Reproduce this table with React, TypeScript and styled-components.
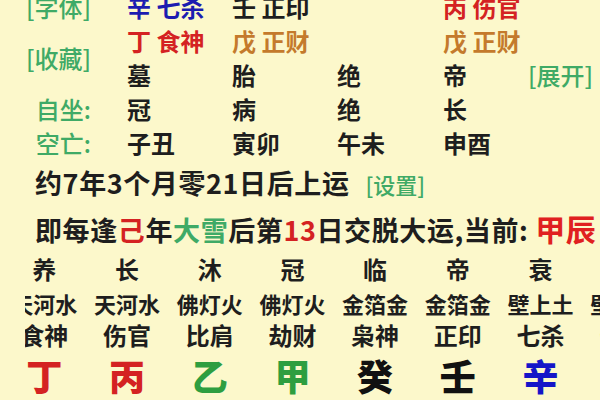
import React from "react";
import styled, { createGlobalStyle } from "styled-components";

const Global = createGlobalStyle`
  html, body { margin: 0; padding: 0; background: #fcf8cb; }
  body { font-family: "Noto Sans CJK SC", "Noto Sans", sans-serif; color: #1e1e1e; }
`;

const C = {
  green: "#3faa66",
  green2: "#2e9e40",
  red: "#d42222",
  blue: "#1c1cb0",
  orange: "#c47a2c",
  black: "#1e1e1e",
};

const Page = styled.div`
  width: 600px;
  height: 400px;
  overflow: hidden;
  background: #fcf8cb;
`;

const Content = styled.div`
  margin-top: -10px;
`;

const TopGrid = styled.div`
  display: grid;
  grid-template-columns: 127px 105px 105px 106px 85px 1fr;
  grid-auto-rows: 34px;
  align-items: center;
  font-size: 24px;
  font-weight: 700;
  white-space: nowrap;
`;

const Label = styled.div<{ $span?: number }>`
  grid-column: 1;
  grid-row: ${(p) => (p.$span ? `span ${p.$span}` : "auto")};
  text-align: right;
  padding-right: 36px;
  color: ${C.green};
  font-weight: 500;
  line-height: 34px;
`;

const Cell = styled.div<{ $color?: string; $col?: number }>`
  color: ${(p) => p.$color || C.black};
  grid-column: ${(p) => (p.$col ? p.$col : "auto")};
  line-height: 34px;
`;

const Link = styled.div`
  grid-column: 6;
  color: ${C.green};
  font-weight: 500;
  line-height: 34px;
`;

const Line = styled.div<{ $h: number }>`
  height: ${(p) => p.$h}px;
  line-height: ${(p) => p.$h}px;
  padding-left: 35px;
  font-size: 27px;
  font-weight: 700;
  letter-spacing: 0.6px;
  white-space: nowrap;
  overflow: hidden;
`;

const Mark = styled.span<{ $color: string; $size?: number }>`
  color: ${(p) => p.$color};
  font-size: ${(p) => (p.$size ? `${p.$size}px` : "inherit")};
`;

const Setting = styled.span`
  color: ${C.green};
  font-size: 22px;
  font-weight: 500;
  letter-spacing: 0;
  margin-left: 16px;
`;

const TableClip = styled.div`
  margin-left: 25px;
  overflow: hidden;
`;

const Table = styled.div`
  margin-left: -22px;
  display: grid;
  grid-template-columns: repeat(8, 82.7px);
  width: max-content;
`;

const TCell = styled.div<{ $h: number; $size: number; $weight: number; $color?: string }>`
  height: ${(p) => p.$h}px;
  line-height: ${(p) => p.$h}px;
  font-size: ${(p) => p.$size}px;
  font-weight: ${(p) => p.$weight};
  color: ${(p) => p.$color || C.black};
  text-align: center;
  white-space: nowrap;
`;

const stages = ["养", "长", "沐", "冠", "临", "帝", "衰", "病"];
const nayin = ["天河水", "天河水", "佛灯火", "佛灯火", "金箔金", "金箔金", "壁上土", "壁上土"];
const gods = ["食神", "伤官", "比肩", "劫财", "枭神", "正印", "七杀", "七杀"];
const stems: [string, string][] = [
  ["丁", C.red],
  ["丙", C.red],
  ["乙", C.green2],
  ["甲", C.green2],
  ["癸", "#111"],
  ["壬", "#111"],
  ["辛", "#1515c8"],
  ["庚", "#111"],
];

export default function App() {
  return (
    <Page>
      <Global />
      <Content>
        <TopGrid>
          <Label>[字体]</Label>
          <Cell $color={C.blue}>辛 七杀</Cell>
          <Cell>壬 正印</Cell>
          <Cell />
          <Cell $color={C.red}>丙 伤官</Cell>

          <Label $span={2}>[收藏]</Label>
          <Cell $color={C.red} $col={2}>丁 食神</Cell>
          <Cell $color={C.orange}>戊 正财</Cell>
          <Cell />
          <Cell $color={C.orange}>戊 正财</Cell>

          <Cell $col={2}>墓</Cell>
          <Cell>胎</Cell>
          <Cell>绝</Cell>
          <Cell>帝</Cell>
          <Link>[展开]</Link>

          <Label>自坐:</Label>
          <Cell>冠</Cell>
          <Cell>病</Cell>
          <Cell>绝</Cell>
          <Cell>长</Cell>

          <Label>空亡:</Label>
          <Cell>子丑</Cell>
          <Cell>寅卯</Cell>
          <Cell>午未</Cell>
          <Cell>申酉</Cell>
        </TopGrid>

        <Line $h={45}>
          约7年3个月零21日后上运<Setting>[设置]</Setting>
        </Line>
        <Line $h={46}>
          即每逢<Mark $color={C.red}>己</Mark>年<Mark $color={C.green}>大雪</Mark>后第
          <Mark $color={C.red}>13</Mark>日交脱大运,当前: <Mark $color="#e02020" $size={30}>甲辰</Mark>
        </Line>

        <TableClip>
          <Table>
            {stages.map((s, i) => (
              <TCell key={"s" + i} $h={36} $size={24} $weight={700}>{s}</TCell>
            ))}
            {nayin.map((s, i) => (
              <TCell key={"n" + i} $h={32} $size={22} $weight={700}>{s}</TCell>
            ))}
            {gods.map((s, i) => (
              <TCell key={"g" + i} $h={32} $size={24} $weight={700}>{s}</TCell>
            ))}
            {stems.map(([s, c], i) => (
              <TCell key={"t" + i} $h={48} $size={36} $weight={900} $color={c}>{s}</TCell>
            ))}
          </Table>
        </TableClip>
      </Content>
    </Page>
  );
}
